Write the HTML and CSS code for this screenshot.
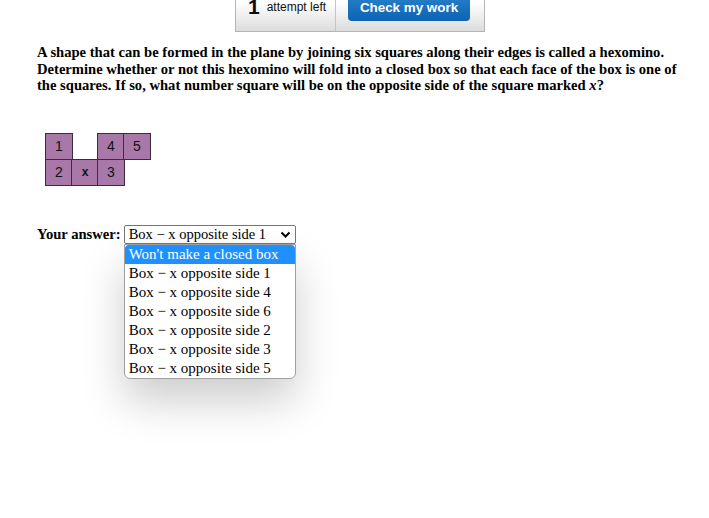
FILE: index.html
```html
<!DOCTYPE html>
<html>
<head>
<meta charset="utf-8">
<link rel="stylesheet" href="styles.css">
</head>
<body>
<div class="page">
  <div class="topbar">
    <div class="attempts"><span class="num">1</span><span class="lbl">attempt left</span></div>
    <div class="check"><span class="btn">Check my work</span></div>
  </div>
  <p class="question">A shape that can be formed in the plane by joining six squares along their edges is called a hexomino. Determine whether or not this hexomino will fold into a closed box so that each face of the box is one of the squares. If so, what number square will be on the opposite side of the square marked <i>x</i>?</p>
  <div class="hexo">
    <div class="sq">1</div><div class="gap"></div><div class="sq">4</div><div class="sq">5</div>
    <div class="sq">2</div><div class="sq x">x</div><div class="sq">3</div><div class="gap"></div>
  </div>
  <div class="answer">
    <span class="label">Your answer:</span>
    <div class="selectwrap">
      <div class="select">Box − x opposite side 1<svg class="chev" width="11" height="7" viewBox="0 0 11 7"><path d="M1.5 1.5 L5.5 5.5 L9.5 1.5" fill="none" stroke="#000" stroke-width="2"/></svg></div>
      <div class="dropdown">
        <div class="item hl">Won't make a closed box</div>
        <div class="item">Box − x opposite side 1</div>
        <div class="item">Box − x opposite side 4</div>
        <div class="item">Box − x opposite side 6</div>
        <div class="item">Box − x opposite side 2</div>
        <div class="item">Box − x opposite side 3</div>
        <div class="item">Box − x opposite side 5</div>
      </div>
    </div>
  </div>
</div>
</body>
</html>
```
FILE: styles.css
```css
html, body { margin: 0; padding: 0; background: #fff; }
body { font-family: "Liberation Serif", "Times New Roman", serif; color: #000; min-height: 518px; overflow: hidden; }
.page { padding: 0 30px 0 37px; min-height: 518px; box-sizing: border-box; }
.topbar {
  margin-left: 198px;
  width: 250px;
  height: 42px;
  margin-top: -10px;
  display: flex;
  border: 1px solid #b4b4b4;
  border-top: none;
  background: linear-gradient(#ffffff 30%, #dcdcdc);
  box-sizing: border-box;
}
.attempts {
  width: 100px;
  border-right: 1px solid #c4c4c4;
  display: flex;
  align-items: flex-start;
  padding: 6px 0 0 12px;
  box-sizing: border-box;
  font-family: "Liberation Sans", Arial, sans-serif;
}
.num { font-size: 21px; font-weight: bold; color: #0d0d1a; line-height: 22px; }
.lbl { font-size: 12px; color: #111; margin-left: 7px; line-height: 14px; margin-top: 4px; }
.check { flex: 1; padding-left: 12px; }
.btn {
  display: inline-block;
  width: 122px;
  height: 31px;
  box-sizing: border-box;
  padding-top: 10px;
  background: linear-gradient(#2f86cf, #0b63b2);
  border-radius: 0 0 4px 4px;
  color: #fff;
  font-family: "Liberation Sans", Arial, sans-serif;
  font-weight: bold;
  font-size: 13.4px;
  text-align: center;
}
.question {
  margin: 12px 0 0 0;
  font-weight: bold;
  font-size: 14.6px;
  line-height: 16.5px;
}
.hexo {
  margin: 40px 0 0 9px;
  display: grid;
  grid-template-columns: repeat(4, 26px);
  grid-auto-rows: 26px;
  width: 104px;
}
.sq {
  background: #a878a8;
  border: 1.5px solid #3c2c3c;
  box-sizing: border-box;
  margin: -0.75px;
  display: flex;
  align-items: center;
  justify-content: center;
  padding-bottom: 2px;
  font-family: "Liberation Sans", Arial, sans-serif;
  font-size: 14px;
  color: #111;
}
.sq.x { font-size: 12px; font-weight: bold; }
.answer {
  margin-top: 39px;
  display: flex;
  align-items: flex-start;
  font-size: 14.6px;
}
.label { font-weight: bold; margin-right: 3px; margin-top: 1px; }
.selectwrap { position: relative; }
.select {
  width: 172px;
  height: 19px;
  box-sizing: border-box;
  border: 1px solid #767676;
  border-radius: 2px;
  padding: 0 0 0 4px;
  font-size: 14.5px;
  line-height: 17px;
  display: flex;
  align-items: center;
  justify-content: space-between;
}
.chev { margin-right: 4px; }
.dropdown {
  position: absolute;
  z-index: 10;
  left: 0;
  top: 19px;
  width: 170px;
  border: 1px solid #a0a0a0;
  border-radius: 0 0 6px 6px;
  background: #ffffff;
  box-shadow: 0 22px 44px rgba(0,0,0,0.2);
  overflow: hidden;
}
.item {
  height: 19px;
  line-height: 18px;
  padding-left: 4px;
  font-size: 15px;
  white-space: nowrap;
  color: #000;
}
.item.hl { background: #1e90ff; color: #fff; border-radius: 4px 4px 0 0; }
```
